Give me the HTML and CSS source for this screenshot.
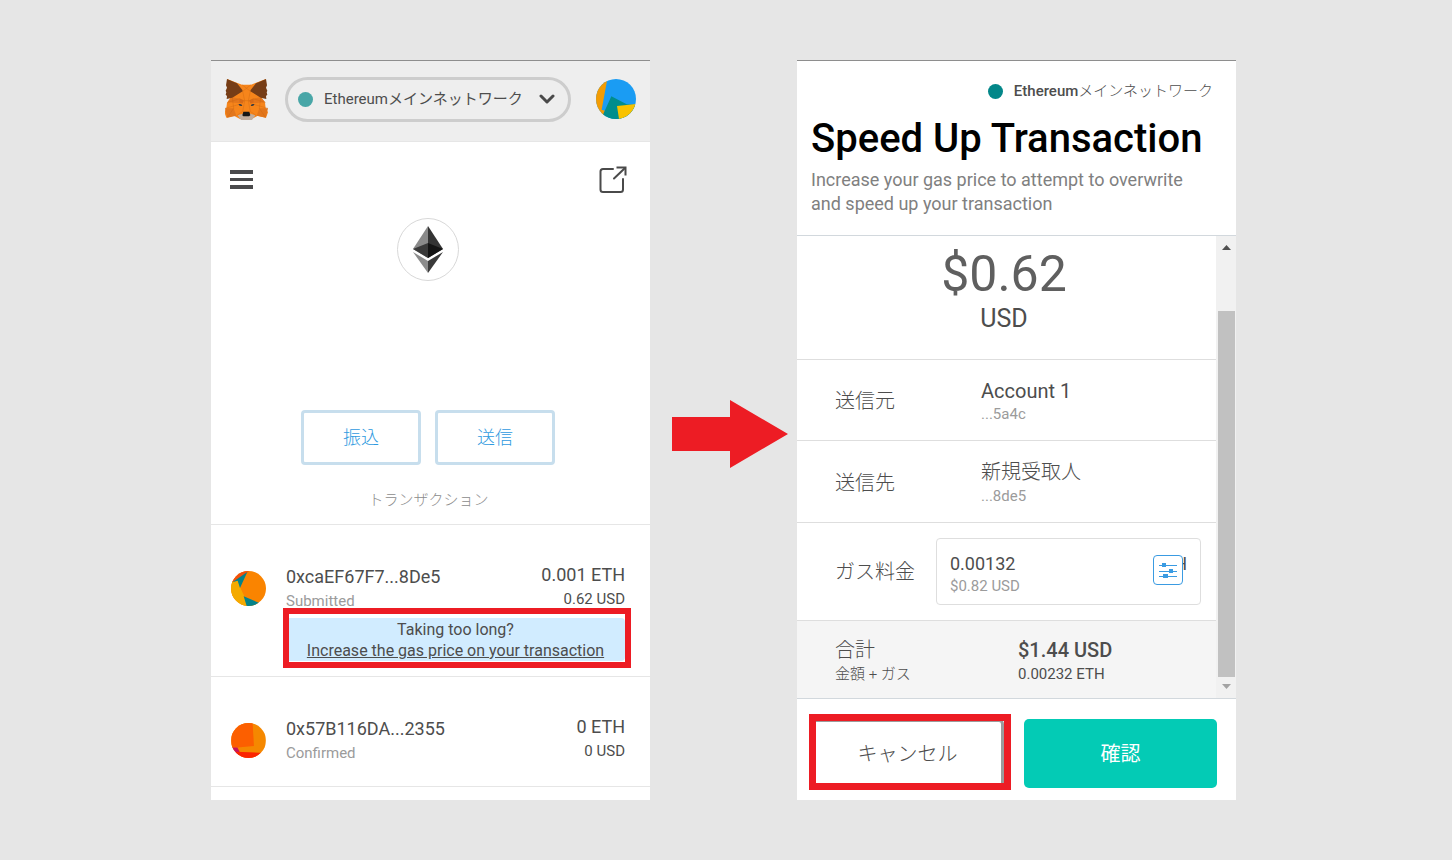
FILE: index.html
```html
<!DOCTYPE html>
<html lang="ja">

<head>
    <meta charset="UTF-8" />
    <meta name="viewport" content="width=device-width, initial-scale=1.0" />
    <link rel="stylesheet" href="styles.css">
    <title>Speed Up Transaction</title>
</head>

<body>
    <main>
        <!-- account screen -->
        <section class="panel">
            <header class="app-header">
                <svg class="fox" viewBox="60 72 129 123" aria-hidden="true">
                    <path fill="#f6851b" d="M66 72l45 17h27l45-17-12 58 9 13 2 16 7 13-6 16-25-6-8 5-10 5h-35l-10-5-8-5-23 6-6-16 6-13 2-16 9-13z" />
                    <path fill="#e2761b" d="M60 160l26 0 8 22-27 6zM189 160l-26 0-8 22 27 6z" />
                    <path fill="#e4761b" d="M82 127l22 4 4 14-20-2-20-1zM167 127l-22 4-4 14 20-2 20-1z" />
                    <path fill="#d86a18" d="M104 131l13 6-5 9-9-4zM145 131l-13 6 5 9 9-4z" />
                    <path fill="#763d16" d="M66 72l30 13 16 20 1 4-31 19-17 4 1-9-4-4 2-7-2-5 4-9-3-7zM183 72l-30 13-16 20-1 4 31 19 17 4-1-9 4-4-2-7 2-5-4-9 3-7z" />
                    <path fill="#c0ad9e" d="M98 181l15-5h23l15 5-10 14h-33z" />
                    <path fill="#161616" d="M115 170h18l3 11-4 3h-17l-3-3z" />
                    <path fill="#233447" d="M100 147l9 1 3 5-8-1zM149 147l-9 1-3 5 8-1z" />
                    <path class="fox-lines" d="M113 109l6 28-6 33M136 109l-6 28 6 33M111 89l25 20M138 89l-25 20M67 143l37-12 13 6h15l13-6 37 12M60 160l40-11M189 160l-40-11M95 182l17-12M154 182l-17-12M67 188l19-28-4-33M182 188l-19-28 4-33" />
                </svg>
                <label class="network">
                    <i class="dot faded"></i>
                    <select aria-label="ネットワーク">
                        <option>Ethereumメインネットワーク</option>
                    </select>
                    <svg class="chevron" viewBox="0 0 16 10" aria-hidden="true">
                        <path d="M2 2l6 6 6-6" />
                    </svg>
                </label>
                <svg class="avatar" viewBox="498 72 120 120" aria-hidden="true">
                    <path fill="#1a9cf3" d="M498 72h120v120H498z" />
                    <path fill="#f39c04" d="M498 72h34l-17 92 10 3-6 25h-21z" />
                    <path fill="#018d8d" d="M544 124l46 24 28 2v42H513z" />
                    <path fill="#f8c200" d="M561 153l57-6v45h-51z" />
                </svg>
            </header>

            <div class="toolbar">
                <button type="button" class="icon-btn" aria-label="メニュー">
                    <svg width="23" height="20" viewBox="0 0 23 20">
                        <path fill="#4a4a4c" d="M0 0h23v4H0zM0 8h23v3H0zM0 15h23v4H0z" />
                    </svg>
                </button>
                <button type="button" class="icon-btn" aria-label="拡大">
                    <svg class="expand" width="28" height="27" viewBox="0 0 28 27">
                        <path d="M14 3H4Q1.500 3 1.500 5.500V23.500Q1.500 26 4 26H21.500Q24 26 24 23.500V13M15 12.500L26 2" />
                        <path class="corner" d="M17.500 1.500H26.500V9.500" />
                    </svg>
                </button>
            </div>

            <div class="balance">
                <svg class="token" viewBox="0 0 62 63" aria-hidden="true">
                    <ellipse cx="31" cy="31.500" rx="30.500" ry="31" fill="#fff" stroke="#d8d8d8" />
                    <path fill="#8a8a8a" d="M31 8v32L16 31z" />
                    <path fill="#343434" d="M31 8v32l15-9z" />
                    <path fill="#3a3a3a" d="M31 25v15l-15-9z" />
                    <path fill="#141414" d="M31 25v15l15-9z" />
                    <path fill="#8c8c8c" d="M31 43v12L16 34z" />
                    <path fill="#3a3a3a" d="M31 43v12l15-21z" />
                </svg>
            </div>

            <div class="actions">
                <button type="button">振込</button>
                <button type="button">送信</button>
            </div>

            <h2 class="list-title">トランザクション</h2>

            <article class="tx pending">
                <svg class="identicon" viewBox="78 65 105 105" aria-hidden="true">
                    <path fill="#fa8400" d="M78 65h105v105H78z" />
                    <path fill="#f2500c" d="M78 65h54l-34 29-20 8z" />
                    <path fill="#f4aa00" d="M78 99l20-7 8 23 12 26 7 29H78z" />
                    <path fill="#04828a" d="M127 68l-22 48-7-22-16 5zM116 141l52 22v7h-43z" />
                </svg>
                <div class="tx-info">
                    <p class="big">0xcaEF67F7...8De5</p>
                    <p class="muted">Submitted</p>
                </div>
                <div class="tx-amount">
                    <p class="big">0.001 ETH</p>
                    <p>0.62 USD</p>
                </div>
                <div class="notice">
                    <p>Taking too long?</p>
                    <a href="#">Increase the gas price on your transaction</a>
                </div>
            </article>

            <article class="tx">
                <svg class="identicon" viewBox="78 68 105 106" aria-hidden="true">
                    <path fill="#f58800" d="M78 68h105v106H78z" />
                    <path fill="#fc5f00" d="M78 68h65l4 70-50 4H78z" />
                    <path fill="#c8145c" d="M78 142h19l7 14-5 18H78z" />
                    <path fill="#fb2500" d="M92 155l91 4v15H92z" />
                </svg>
                <div class="tx-info">
                    <p class="big">0x57B116DA...2355</p>
                    <p class="muted">Confirmed</p>
                </div>
                <div class="tx-amount">
                    <p class="big">0 ETH</p>
                    <p>0 USD</p>
                </div>
            </article>
        </section>

        <svg class="arrow" width="116" height="68" viewBox="0 0 116 68" aria-hidden="true">
            <path fill="#ed1c24" d="M0 17h58V0l58 34-58 34V51H0z" />
        </svg>

        <!-- confirm screen -->
        <section class="panel">
            <header class="confirm-header">
                <p class="network-name"><i class="dot"></i><span>Ethereum<span class="jp">メインネットワーク</span></span></p>
                <h1>Speed Up Transaction</h1>
                <p class="subtitle">Increase your gas price to attempt to overwrite and speed up your transaction</p>
            </header>

            <div class="scroll-area">
                <div class="details">
                    <div class="summary">
                        <p class="price">$0.62</p>
                        <p class="currency">USD</p>
                    </div>
                    <div class="row">
                        <p class="label">送信元</p>
                        <div>
                            <p class="value">Account 1</p>
                            <p class="muted">...5a4c</p>
                        </div>
                    </div>
                    <div class="row">
                        <p class="label">送信先</p>
                        <div>
                            <p class="value jp">新規受取人</p>
                            <p class="muted">...8de5</p>
                        </div>
                    </div>
                    <div class="row gas">
                        <p class="label">ガス料金</p>
                        <div class="gas-box">
                            <p class="gas-value"><span>0.00132</span><span>ETH</span></p>
                            <p class="muted">$0.82 USD</p>
                            <button type="button" class="edit-gas" aria-label="ガス料金を編集">
                                <svg width="18" height="17" viewBox="0 0 18 17">
                                    <path stroke="#3a9be2" stroke-width="1" d="M0 3.500h18M0 9.500h18M0 14.500h18" />
                                    <path fill="#3a9be2" d="M3 1h4v4H3zM10 7h4v4h-4zM4 12h5v4H4z" />
                                </svg>
                            </button>
                        </div>
                    </div>
                    <div class="row total">
                        <div>
                            <p class="label">合計</p>
                            <p class="jp">金額 + ガス</p>
                        </div>
                        <div>
                            <p class="sum">$1.44 USD</p>
                            <p>0.00232 ETH</p>
                        </div>
                    </div>
                </div>
                <div class="scrollbar" aria-hidden="true">
                    <svg width="9" height="5" viewBox="0 0 9 5"><path fill="#505050" d="M0 5l4.500-5L9 5z" /></svg>
                    <div class="thumb"></div>
                    <svg width="9" height="5" viewBox="0 0 9 5"><path fill="#a3a3a3" d="M0 0h9L4.500 5z" /></svg>
                </div>
            </div>

            <footer>
                <button type="button" class="cancel">キャンセル</button>
                <button type="button" class="confirm">確認</button>
            </footer>
        </section>
    </main>
</body>

</html>
```
FILE: styles.css
```css
* {
    margin: 0;
    padding: 0;
    box-sizing: border-box;
    font-family: Roboto, "Noto Sans CJK JP", sans-serif;
}

body {
    background: #e6e6e6;
    color: #4d4d4d;
    font-size: 15px;
}

svg {
    display: block;
}

button {
    cursor: pointer;
}

main {
    display: grid;
    grid-template-columns: 1fr 147px 1fr;
    padding: 60px 216px 60px 211px;
}

.panel {
    background: #fff;
    border-top: 1px solid #8e8e8e;
}

.arrow {
    margin: 340px 0 0 22px;
}

.muted {
    color: #9b9b9b;
}

.jp {
    font-weight: 300;
}

.dot {
    width: 15px;
    height: 15px;
    border-radius: 50%;
    background: #038789;
}

.faded {
    background: #48a6a7;
}

/* account screen */

.app-header {
    display: flex;
    align-items: center;
    height: 81px;
    padding: 0 14px 4px;
    background: #eee;
    border-bottom: 1px solid #e6e6e6;
}

.fox {
    width: 43px;
    height: 41px;
    margin-right: 17px;
}

.fox-lines {
    fill: none;
    stroke: #c4620f;
    stroke-width: 1;
}

.network {
    display: flex;
    flex: 1;
    align-items: center;
    gap: 11px;
    height: 45px;
    padding: 0 13px 0 10px;
    border: 3px solid #cdcdcd;
    border-radius: 23px;
}

.network select {
    flex: 1;
    min-width: 0;
    border: none;
    outline: none;
    appearance: none;
    background: none;
    color: #4d4d4d;
    font-size: 15px;
    font-weight: 400;
}

.chevron {
    width: 16px;
    height: 10px;
    fill: none;
    stroke: #4a4a4a;
    stroke-width: 3;
    stroke-linecap: round;
    stroke-linejoin: round;
}

.avatar {
    width: 40px;
    height: 40px;
    margin-left: 25px;
    border-radius: 50%;
}

.toolbar {
    display: flex;
    align-items: center;
    justify-content: space-between;
    padding: 24px 23px 0 19px;
}

.icon-btn {
    border: none;
    background: none;
}

.expand {
    fill: none;
    stroke: #4a4a4a;
    stroke-width: 2;
    stroke-linecap: round;
}

.corner {
    stroke-linecap: butt;
}

.balance {
    display: flex;
    justify-content: center;
    padding: 25px 5px 129px 0;
}

.token {
    width: 62px;
    height: 63px;
}

.actions {
    display: flex;
    justify-content: center;
    gap: 14px;
    padding-right: 5px;
}

.actions button {
    width: 120px;
    height: 55px;
    padding-bottom: 4px;
    border: 3px solid #c7deed;
    border-radius: 4px;
    background: #fff;
    color: #2f9ae0;
    font-size: 18px;
    font-weight: 300;
}

.list-title {
    padding: 25px 4px 14px 0;
    border-bottom: 1px solid #e6e6e6;
    color: #8c8c8c;
    font-size: 15px;
    font-weight: 300;
    line-height: 20px;
    text-align: center;
}

.tx {
    display: grid;
    grid-template-columns: 35px 1fr auto;
    column-gap: 20px;
    padding: 38px 25px 21px 20px;
    border-bottom: 1px solid #e6e6e6;
    line-height: 24px;
}

.pending {
    padding-bottom: 15px;
}

.identicon {
    width: 35px;
    height: 35px;
    margin-top: 8px;
    border-radius: 50%;
}

.tx-info {
    padding-top: 2px;
}

.tx-amount {
    text-align: right;
}

.big {
    font-size: 18px;
}

.notice {
    position: relative;
    grid-column: 2 / 4;
    margin-top: 5px;
    padding-top: 1px;
    border-radius: 4px;
    background: #d1ecff;
    font-size: 16px;
    line-height: 21px;
    text-align: center;
}

.notice a {
    color: #4d4d4d;
}

/* red frames drawn around the highlighted parts */
.notice::after,
.cancel::after {
    content: "";
    position: absolute;
    border: 6px solid #ed1c24;
    inset: -10px -6px -7px -3px;
}

/* confirm screen */

.confirm-header {
    padding: 18px 14px 19px;
    border-bottom: 1px solid #d2d8dd;
}

.network-name {
    display: flex;
    align-items: center;
    justify-content: flex-end;
    gap: 11px;
    padding-right: 9px;
    font-weight: 500;
    line-height: 24px;
}

h1 {
    margin: 12px 0 5px;
    color: #000;
    font-size: 40px;
    font-weight: 500;
    line-height: 48px;
}

.subtitle {
    padding-right: 20px;
    color: #808080;
    font-size: 18px;
    line-height: 24px;
}

.scroll-area {
    display: flex;
    border-bottom: 1px solid #d2d8dd;
}

.details {
    flex: 1;
}

.summary {
    padding: 8px 5px 25px 0;
    border-bottom: 1px solid #dedede;
    text-align: center;
}

.price {
    color: #5f5f5f;
    font-size: 50px;
    line-height: 60px;
}

.currency {
    font-size: 25px;
    line-height: 30px;
}

.row {
    display: grid;
    grid-template-columns: 146px 1fr;
    align-items: center;
    padding: 19px 15px 15px 38px;
    border-bottom: 1px solid #dedede;
    line-height: 22px;
}

.label {
    padding-bottom: 2px;
    color: #4d4d4d;
    font-size: 20px;
    font-weight: 300;
}

.value {
    font-size: 20px;
    line-height: 24px;
}

.value.jp {
    line-height: 25px;
}

.gas {
    grid-template-columns: 101px 1fr;
    padding: 15px 15px 15px 38px;
}

.gas .label {
    padding-bottom: 0;
}

.gas-box {
    position: relative;
    padding: 13px 13px 8px;
    border: 1px solid #dedede;
    border-radius: 4px;
    line-height: 20px;
}

.gas-value {
    display: flex;
    justify-content: space-between;
    font-size: 18px;
    line-height: 24px;
}

.edit-gas {
    position: absolute;
    top: 16px;
    right: 17px;
    display: flex;
    align-items: center;
    justify-content: center;
    width: 30px;
    height: 30px;
    border: 1px solid #3a9be2;
    border-radius: 4px;
    background: #fff;
}

.total {
    grid-template-columns: 183px 1fr;
    padding: 16px 15px 13px 38px;
    border-bottom: none;
    background: #f5f5f5;
}

.total .label,
.sum {
    padding: 0;
    line-height: 26px;
}

.sum {
    font-size: 20px;
    font-weight: 500;
}

.scrollbar {
    display: flex;
    flex-direction: column;
    align-items: center;
    justify-content: space-between;
    width: 20px;
    padding: 9px 0;
    background: #f1f1f1;
}

.thumb {
    flex: 1;
    width: 17px;
    margin: 61px 0 7px;
    background: #c1c1c1;
}

footer {
    display: grid;
    grid-template-columns: 1fr 1fr;
    gap: 20px;
    padding: 20px 19px 12px 14px;
}

footer button {
    position: relative;
    height: 69px;
    padding-bottom: 2px;
    border: none;
    border-radius: 5px;
    font-size: 20px;
    font-weight: 300;
}

footer .cancel {
    border: 3px solid #9b9b9b;
    background: #fff;
    color: #4d4d4d;
}

/* offsets count from inside the button border */
.cancel::after {
    border-width: 7px;
    inset: -8px -10px -5px -5px;
}

footer .confirm {
    background: #03cbb5;
    color: #fff;
    font-weight: 400;
}
```
